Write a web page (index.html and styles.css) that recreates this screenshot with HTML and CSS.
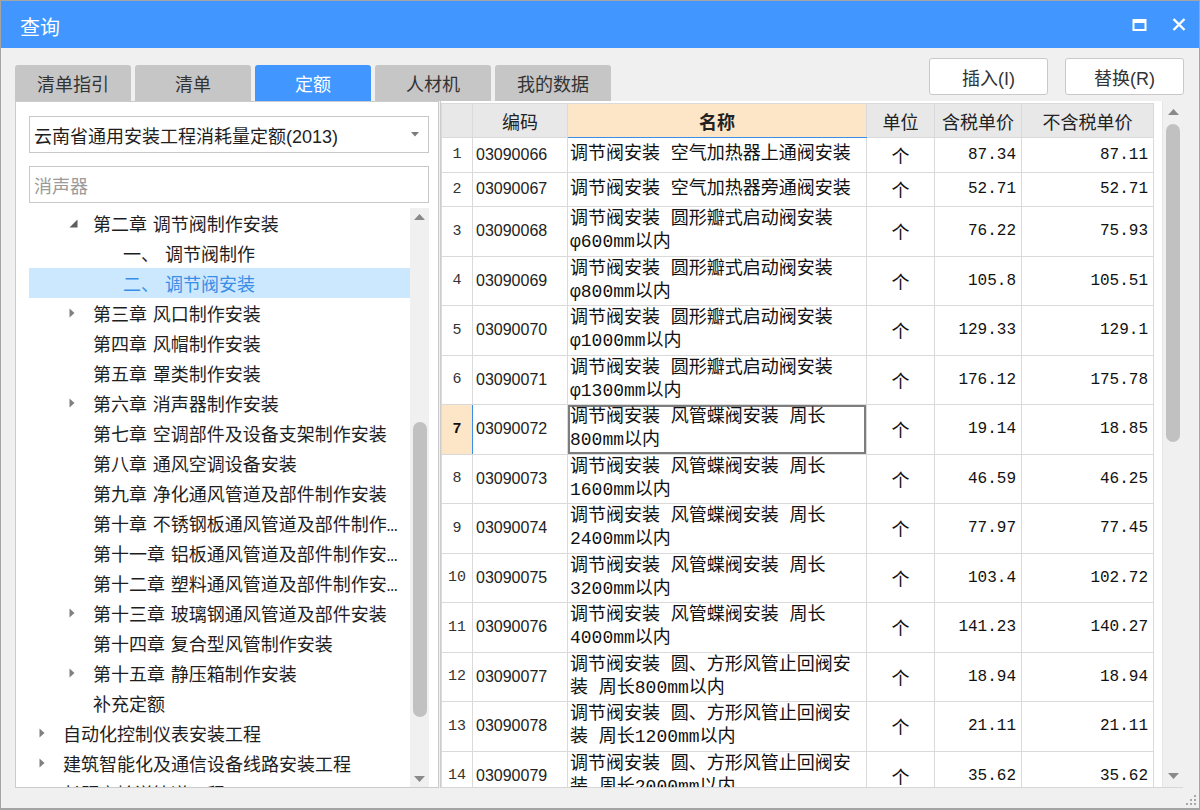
FILE: index.html
```html
<!DOCTYPE html>
<html lang="zh-CN">
<head>
<meta charset="utf-8">
<title>查询</title>
<link rel="stylesheet" href="styles.css">
</head>
<body>
<div class="window">
  <div class="titlebar">
    <span class="title">查询</span>
    <div class="win-btns">
      <svg class="ico-max" width="15" height="12" viewBox="0 0 15 12"><path fill="#fff" fill-rule="evenodd" d="M0.5 0H14.5V12H0.5Z M2.5 4V10H12.5V4Z"/></svg>
      <svg class="ico-close" width="14" height="13" viewBox="0 0 14 13"><path d="M1.5 1L12.5 12M12.5 1L1.5 12" stroke="#fff" stroke-width="2.4" fill="none"/></svg>
    </div>
  </div>

  <div class="toolbar">
    <div class="tabs">
      <div class="tab">清单指引</div>
      <div class="tab">清单</div>
      <div class="tab active">定额</div>
      <div class="tab">人材机</div>
      <div class="tab">我的数据</div>
    </div>
    <div class="actions">
      <div class="btn">插入(I)</div>
      <div class="btn">替换(R)</div>
    </div>
  </div>

  <div class="main">
    <div class="left">
      <div class="combo">
        <span>云南省通用安装工程消耗量定额(2013)</span>
        <svg width="8" height="5" viewBox="0 0 8 5"><path d="M0 0H8L4 4.5Z" fill="#7c7c7c"/></svg>
      </div>
      <div class="search">消声器</div>
      <div class="tree-wrap">
        <div class="tree">
          <div class="node l2"><span class="tw"><svg width="9" height="9" viewBox="0 0 9 9"><path d="M8.5 0.5V8.5H0.5Z" fill="#5e5e5e"/></svg></span><span class="lbl">第二章 调节阀制作安装</span></div>
          <div class="node l3"><span class="tw"></span><span class="lbl"><span class="num">一、</span>调节阀制作</span></div>
          <div class="node l3 sel"><span class="tw"></span><span class="lbl"><span class="num">二、</span>调节阀安装</span></div>
          <div class="node l2"><span class="tw"><svg width="6" height="10" viewBox="0 0 6 10"><path d="M0.5 0.5L5.5 5L0.5 9.5Z" fill="#808080"/></svg></span><span class="lbl">第三章 风口制作安装</span></div>
          <div class="node l2"><span class="tw"></span><span class="lbl">第四章 风帽制作安装</span></div>
          <div class="node l2"><span class="tw"></span><span class="lbl">第五章 罩类制作安装</span></div>
          <div class="node l2"><span class="tw"><svg width="6" height="10" viewBox="0 0 6 10"><path d="M0.5 0.5L5.5 5L0.5 9.5Z" fill="#808080"/></svg></span><span class="lbl">第六章 消声器制作安装</span></div>
          <div class="node l2"><span class="tw"></span><span class="lbl">第七章 空调部件及设备支架制作安装</span></div>
          <div class="node l2"><span class="tw"></span><span class="lbl">第八章 通风空调设备安装</span></div>
          <div class="node l2"><span class="tw"></span><span class="lbl">第九章 净化通风管道及部件制作安装</span></div>
          <div class="node l2"><span class="tw"></span><span class="lbl">第十章 不锈钢板通风管道及部件制作安装</span></div>
          <div class="node l2"><span class="tw"></span><span class="lbl">第十一章 铝板通风管道及部件制作安装</span></div>
          <div class="node l2"><span class="tw"></span><span class="lbl">第十二章 塑料通风管道及部件制作安装</span></div>
          <div class="node l2"><span class="tw"><svg width="6" height="10" viewBox="0 0 6 10"><path d="M0.5 0.5L5.5 5L0.5 9.5Z" fill="#808080"/></svg></span><span class="lbl">第十三章 玻璃钢通风管道及部件安装</span></div>
          <div class="node l2"><span class="tw"></span><span class="lbl">第十四章 复合型风管制作安装</span></div>
          <div class="node l2"><span class="tw"><svg width="6" height="10" viewBox="0 0 6 10"><path d="M0.5 0.5L5.5 5L0.5 9.5Z" fill="#808080"/></svg></span><span class="lbl">第十五章 静压箱制作安装</span></div>
          <div class="node l2"><span class="tw"></span><span class="lbl">补充定额</span></div>
          <div class="node l1"><span class="tw"><svg width="6" height="10" viewBox="0 0 6 10"><path d="M0.5 0.5L5.5 5L0.5 9.5Z" fill="#808080"/></svg></span><span class="lbl">自动化控制仪表安装工程</span></div>
          <div class="node l1"><span class="tw"><svg width="6" height="10" viewBox="0 0 6 10"><path d="M0.5 0.5L5.5 5L0.5 9.5Z" fill="#808080"/></svg></span><span class="lbl">建筑智能化及通信设备线路安装工程</span></div>
          <div class="node l1"><span class="tw"><svg width="6" height="10" viewBox="0 0 6 10"><path d="M0.5 0.5L5.5 5L0.5 9.5Z" fill="#808080"/></svg></span><span class="lbl">长距离输送管道工程</span></div>
        </div>
        <div class="vscroll tree-scroll">
          <div class="arr"><svg width="11" height="6" viewBox="0 0 11 6"><path d="M0 6L5.5 0L11 6Z" fill="#8a8a8a"/></svg></div>
          <div class="track"><div class="thumb"></div></div>
          <div class="arr"><svg width="11" height="6" viewBox="0 0 11 6"><path d="M0 0L5.5 6L11 0Z" fill="#8a8a8a"/></svg></div>
        </div>
      </div>
    </div>

    <div class="right">
      <div class="grid-wrap">
        <table class="grid">
          <colgroup>
            <col class="c-no"><col class="c-code"><col class="c-name"><col class="c-unit"><col class="c-p1"><col class="c-p2">
          </colgroup>
          <thead>
            <tr><th></th><th>编码</th><th class="cur-col">名称</th><th>单位</th><th>含税单价</th><th>不含税单价</th></tr>
          </thead>
          <tbody>
            <tr class="s"><td class="no">1</td><td class="code">03090066</td><td class="name">调节阀安装 空气加热器上通阀安装</td><td class="unit">个</td><td class="price">87.34</td><td class="price">87.11</td></tr>
            <tr class="s"><td class="no">2</td><td class="code">03090067</td><td class="name">调节阀安装 空气加热器旁通阀安装</td><td class="unit">个</td><td class="price">52.71</td><td class="price">52.71</td></tr>
            <tr class="d"><td class="no">3</td><td class="code">03090068</td><td class="name">调节阀安装 圆形瓣式启动阀安装 φ600mm以内</td><td class="unit">个</td><td class="price">76.22</td><td class="price">75.93</td></tr>
            <tr class="d"><td class="no">4</td><td class="code">03090069</td><td class="name">调节阀安装 圆形瓣式启动阀安装 φ800mm以内</td><td class="unit">个</td><td class="price">105.8</td><td class="price">105.51</td></tr>
            <tr class="d"><td class="no">5</td><td class="code">03090070</td><td class="name">调节阀安装 圆形瓣式启动阀安装 φ1000mm以内</td><td class="unit">个</td><td class="price">129.33</td><td class="price">129.1</td></tr>
            <tr class="d"><td class="no">6</td><td class="code">03090071</td><td class="name">调节阀安装 圆形瓣式启动阀安装 φ1300mm以内</td><td class="unit">个</td><td class="price">176.12</td><td class="price">175.78</td></tr>
            <tr class="d cur"><td class="no">7</td><td class="code">03090072</td><td class="name cur-cell">调节阀安装 风管蝶阀安装 周长800mm以内</td><td class="unit">个</td><td class="price">19.14</td><td class="price">18.85</td></tr>
            <tr class="d"><td class="no">8</td><td class="code">03090073</td><td class="name">调节阀安装 风管蝶阀安装 周长1600mm以内</td><td class="unit">个</td><td class="price">46.59</td><td class="price">46.25</td></tr>
            <tr class="d"><td class="no">9</td><td class="code">03090074</td><td class="name">调节阀安装 风管蝶阀安装 周长2400mm以内</td><td class="unit">个</td><td class="price">77.97</td><td class="price">77.45</td></tr>
            <tr class="d"><td class="no">10</td><td class="code">03090075</td><td class="name">调节阀安装 风管蝶阀安装 周长3200mm以内</td><td class="unit">个</td><td class="price">103.4</td><td class="price">102.72</td></tr>
            <tr class="d"><td class="no">11</td><td class="code">03090076</td><td class="name">调节阀安装 风管蝶阀安装 周长4000mm以内</td><td class="unit">个</td><td class="price">141.23</td><td class="price">140.27</td></tr>
            <tr class="d"><td class="no">12</td><td class="code">03090077</td><td class="name">调节阀安装 圆、方形风管止回阀安装 周长800mm以内</td><td class="unit">个</td><td class="price">18.94</td><td class="price">18.94</td></tr>
            <tr class="d"><td class="no">13</td><td class="code">03090078</td><td class="name">调节阀安装 圆、方形风管止回阀安装 周长1200mm以内</td><td class="unit">个</td><td class="price">21.11</td><td class="price">21.11</td></tr>
            <tr class="d"><td class="no">14</td><td class="code">03090079</td><td class="name">调节阀安装 圆、方形风管止回阀安装 周长2000mm以内</td><td class="unit">个</td><td class="price">35.62</td><td class="price">35.62</td></tr>
          </tbody>
        </table>
      </div>
      <div class="vscroll grid-scroll">
        <div class="arr"><svg width="11" height="6" viewBox="0 0 11 6"><path d="M0 6L5.5 0L11 6Z" fill="#8a8a8a"/></svg></div>
        <div class="track"><div class="thumb"></div></div>
        <div class="arr"><svg width="11" height="6" viewBox="0 0 11 6"><path d="M0 0L5.5 6L11 0Z" fill="#8a8a8a"/></svg></div>
      </div>
    </div>
  </div>

  <div class="statusbar">
    <svg class="grip" width="12" height="12" viewBox="0 0 12 12" fill="#a8a8a8">
      <rect x="9" y="1" width="2" height="2"/>
      <rect x="5" y="5" width="2" height="2"/><rect x="9" y="5" width="2" height="2"/>
      <rect x="1" y="9" width="2" height="2"/><rect x="5" y="9" width="2" height="2"/><rect x="9" y="9" width="2" height="2"/>
    </svg>
  </div>
</div>
</body>
</html>
```

FILE: styles.css
```css
* { box-sizing: border-box; }
html, body { margin: 0; padding: 0; }
body {
  width: 1200px;
  height: 810px;
  overflow: hidden;
  background: #f0f0f0;
  font-family: "Liberation Sans", "Noto Sans CJK SC", sans-serif;
  color: #1e1e1e;
}

.window {
  width: 1200px;
  height: 810px;
  display: flex;
  flex-direction: column;
  background: #f0f0f0;
  border: 1px solid #a4a4a4;
  border-bottom-width: 2px;
}

/* title bar */
.titlebar {
  flex: none;
  height: 47px;
  background: #4197ff;
  color: #fff;
  display: flex;
  align-items: center;
  justify-content: space-between;
  padding: 3px 13px 0 19px;
}
.title { font-size: 20px; }
.win-btns { display: flex; align-items: center; gap: 25px; margin-top: -3px; }

/* toolbar: tabs + action buttons */
.toolbar {
  flex: none;
  height: 53px;
  display: flex;
  justify-content: space-between;
  padding: 0 15px 0 14px;
}
.tabs { display: flex; gap: 4px; align-self: flex-end; }
.tab {
  width: 116px;
  height: 36px;
  background: #c6c6c6;
  border-radius: 3px 3px 0 0;
  display: flex;
  align-items: center;
  justify-content: center;
  font-size: 18px;
  color: #333;
}
.tab.active { background: #4197ff; color: #fff; }
.actions { display: flex; gap: 17px; padding-top: 10px; }
.btn {
  width: 119px;
  height: 37px;
  background: #fff;
  border: 1px solid #c9c9c9;
  border-radius: 3px;
  display: flex;
  align-items: center;
  justify-content: center;
  font-size: 18px;
  color: #333;
}

/* main area */
.main {
  flex: 1;
  min-height: 0;
  display: flex;
  gap: 1px;
  padding: 0 16px 0 14px;
}

.left {
  flex: none;
  width: 424px;
  background: #fff;
  border: 1px solid #cbcbcb;
  padding: 14px 9px 0 13px;
  display: flex;
  flex-direction: column;
}
.combo, .search {
  flex: none;
  height: 37px;
  border: 1px solid #c8c8c8;
  display: flex;
  align-items: center;
  font-size: 18px;
  padding: 0 9px 0 4px;
}
.combo { justify-content: space-between; color: #1e1e1e; }
.search { margin-top: 13px; color: #9a9a9a; }

.tree-wrap {
  flex: 1;
  min-height: 0;
  margin-top: 5px;
  display: flex;
}
.tree { flex: 1; min-width: 0; overflow: hidden; }
.node {
  height: 30px;
  display: flex;
  align-items: center;
  white-space: nowrap;
  font-family: "Liberation Mono", "Noto Sans CJK SC", sans-serif;
  font-size: 18px;
  word-spacing: -5px;
  color: #1e1e1e;
  padding-right: 9px;
}
.node.l1 { padding-left: 10px; }
.node.l2 { padding-left: 40px; }
.node.l3 { padding-left: 70px; }
.node .tw { flex: none; width: 24px; display: flex; align-items: center; }
.node .lbl { flex: 1; min-width: 0; overflow: hidden; text-overflow: ellipsis; }
.node .num { margin-right: 6px; }
.node.sel { background: #cce8ff; color: #3a8ee6; }

/* scrollbars */
.vscroll {
  flex: none;
  display: flex;
  flex-direction: column;
  background: #f0f0f0;
}
.vscroll .arr {
  flex: none;
  height: 17px;
  display: flex;
  align-items: center;
  justify-content: center;
}
.vscroll .track { flex: 1; min-height: 0; display: flex; flex-direction: column; align-items: center; }
.vscroll .thumb { background: #c1c1c1; border-radius: 7px; width: 14px; }
.tree-scroll { width: 19px; }
.tree-scroll .track .thumb { margin-top: 197px; height: 295px; }

/* right grid */
.right {
  flex: 1;
  min-width: 0;
  display: flex;
  background: #fff;
  border-left: 1px solid #cdcdcd;
  border-bottom: 1px solid #d6d6d6;
  padding-top: 2px;
}
.grid-wrap { flex: 1; min-width: 0; overflow: hidden; background: #fff; }
.grid-scroll { width: 21px; margin-top: -2px; border-left: 1px solid #e6e6e6; }
.grid-scroll .arr { height: 22px; }
.grid-scroll .track .thumb { margin-top: 1px; height: 318px; width: 14px; }

.grid {
  border-collapse: collapse;
  table-layout: fixed;
  width: 712px;
}
.c-no { width: 31px; }
.c-code { width: 95px; }
.c-name { width: 299px; }
.c-unit { width: 68px; }
.c-p1 { width: 87px; }
.c-p2 { width: 132px; }

.grid th, .grid td {
  border: 1px solid #dadada;
  padding: 0;
  overflow: hidden;
}
.grid th {
  height: 34px;
  background: #e8e8e8;
  font-family: "Noto Sans CJK SC", sans-serif;
  font-weight: normal;
  font-size: 18px;
  color: #222;
  text-align: center;
}
.grid th.cur-col {
  background: #fde5c7;
  font-weight: bold;
  border-bottom: 1px solid #3a8ee6;
}
.grid tr.s td { height: 34.6px; }
.grid tr.d td { height: 49.5px; }
.grid td { color: #111; vertical-align: middle; }
.grid td.no {
  text-align: center;
  font-family: "Liberation Mono", monospace;
  font-size: 15px;
  color: #333;
}
.grid tr.cur td.no {
  background: #fde5c7;
  font-weight: bold;
  color: #111;
  border-right: 1px solid #3a8ee6;
}
.grid td.code {
  font-family: "Liberation Sans", sans-serif;
  font-size: 16px;
  padding-left: 3px;
  color: #222;
}
.grid td.name {
  font-family: "Liberation Mono", "Noto Sans CJK SC", monospace;
  font-size: 18px;
  line-height: 23px;
  padding: 0 3px 0 2px;
}
.grid td.cur-cell { box-shadow: inset 0 0 0 2px #7d7d7d; }
.grid td.unit {
  text-align: center;
  font-family: "Noto Sans CJK SC", sans-serif;
  font-size: 18px;
}
.grid td.price {
  text-align: right;
  font-family: "Liberation Mono", monospace;
  font-size: 16px;
  padding-right: 5px;
}

/* status bar */
.statusbar {
  flex: none;
  height: 20px;
  display: flex;
  justify-content: flex-end;
  align-items: flex-end;
  padding: 0 2px 2px 0;
}
```
